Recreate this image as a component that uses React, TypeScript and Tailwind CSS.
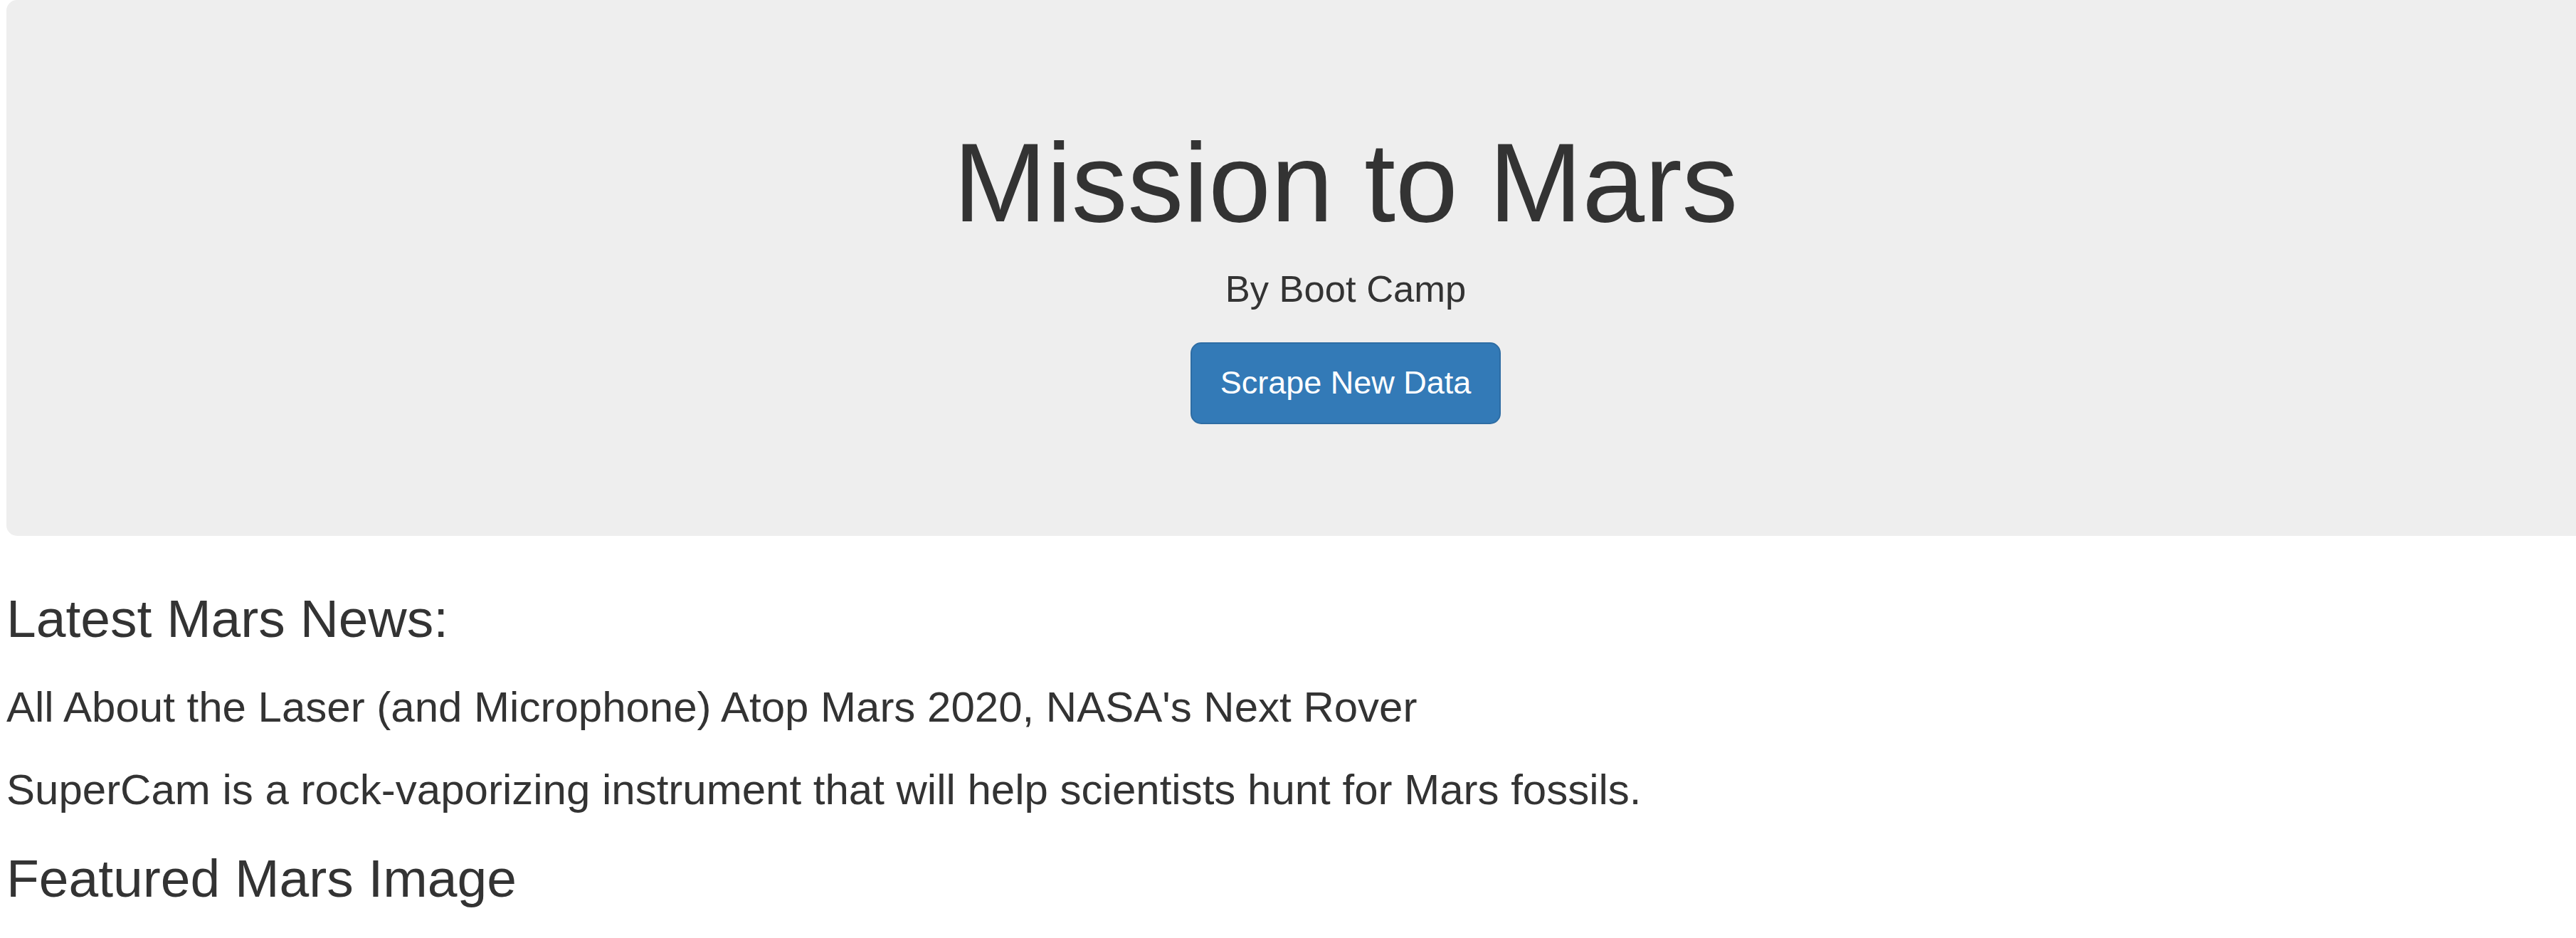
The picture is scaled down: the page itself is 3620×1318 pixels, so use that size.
const news = {
  title: "All About the Laser (and Microphone) Atop Mars 2020, NASA's Next Rover",
  paragraph:
    "SuperCam is a rock-vaporizing instrument that will help scientists hunt for Mars fossils.",
};

export default function App() {
  return (
    <div className="min-h-screen w-full overflow-hidden bg-white pl-[9px] font-['Liberation_Sans',Arial,sans-serif] text-[#333]">
      {/* jumbotron */}
      <div className="mb-[75px] w-[3764px] rounded-[15px] bg-[#eee] pt-[170px] pb-[120px] text-center">
        <h1 className="mb-[25px] text-[157.5px] font-normal leading-[1.1]">Mission to Mars</h1>
        <p className="mb-[37.5px] text-[52.5px] leading-[75px]">By Boot Camp</p>
        <div className="mb-[37.5px] flex justify-center">
          <button className="h-[115px] rounded-[15px] border-[2.5px] border-[#2e6da4] bg-[#337ab7] px-[40px] text-[45px] leading-[60px] text-white">
            Scrape New Data
          </button>
        </div>
      </div>

      <div className="flex flex-col gap-[50px]">
        <h2 className="text-[75px] font-normal leading-[1.1]">Latest Mars News:</h2>
        <h3 className="text-[60px] font-normal leading-[1.1]">{news.title}</h3>
        <h3 className="text-[60px] font-normal leading-[1.1]">{news.paragraph}</h3>
        <h2 className="text-[75px] font-normal leading-[1.1]">Featured Mars Image</h2>
      </div>
    </div>
  );
}
